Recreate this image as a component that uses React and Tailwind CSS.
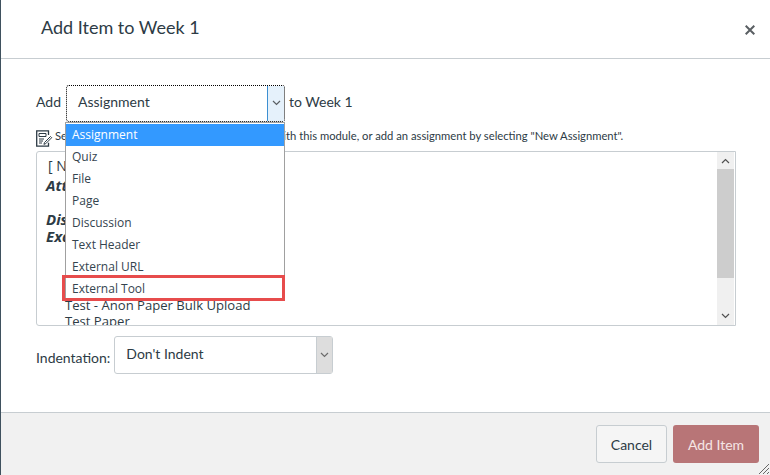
import React from 'react';

const menuItems = ['Assignment', 'Quiz', 'File', 'Page', 'Discussion', 'Text Header', 'External URL', 'External Tool'];

const Chevron = ({ className }) => (
  <svg className={className} width="9" height="6" viewBox="0 0 9 6" fill="none" stroke="currentColor" strokeWidth="1.2">
    <path d="M1 1l3.5 3.5L8 1" />
  </svg>
);

const NoteIcon = () => (
  <svg width="17" height="17" viewBox="0 0 17 17" fill="none" stroke="#2d3b45" className="shrink-0">
    <path d="M12.5 5V.8H.7v15.4h11.8v-3.5" strokeWidth="1.3" />
    <path d="M3 3.5h7v3H3z" strokeWidth="1" />
    <path d="M3 9h5M3 11h4M3 13h3" strokeWidth="1" />
    <path d="M8.5 12.5l-.6 1.8 1.8-.6 6-6-1.2-1.2z" strokeWidth="1" />
  </svg>
);

const App = () => {
  return (
    <div className="relative w-[770px] h-[475px] flex flex-col overflow-hidden bg-white border-l border-[#3f515e] text-[#2d3b45] font-['Lato',sans-serif]">
      {/* Header */}
      <div className="h-[59px] shrink-0 flex items-center justify-between pl-10 pr-[15px] border-b-[1px] border-[#c7cdd1]">
        <h1 className="text-[18px] leading-6 -mt-1">Add Item to Week 1</h1>
        <svg width="10" height="10" viewBox="0 0 10 10" stroke="#5a5f63" strokeWidth="2" className="mt-0.5">
          <path d="M.7.7l8.6 8.6M9.3.7L.7 9.3" />
        </svg>
      </div>

      {/* Body */}
      <div className="flex-1 flex flex-col pl-[35px] pt-[26px]">
        <div className="flex items-center h-9 text-[14px]">
          <span className="-mt-[4px]">Add</span>
          <div className="ml-[5px] w-[219px] h-[37px] flex border border-dotted border-black rounded-[3px] bg-white">
            <span className="flex-1 pl-[11px] leading-[31px]">Assignment</span>
            <span className="w-[17px] flex items-center justify-center bg-[#e5f1fb] border-l border-[#3d8fd1]">
              <Chevron className="text-[#5a5f63]" />
            </span>
          </div>
          <span className="ml-[4px] -mt-[4px]">to Week 1</span>
        </div>

        <div className="flex items-center gap-[2px] h-[20px] mt-[7px] whitespace-nowrap">
          <NoteIcon />
          <span className="text-[11.24px] -mt-[4px]">Select the assignment you want to associate with this module, or add an assignment by selecting "New Assignment".</span>
        </div>

        {/* Item list */}
        <div className="mt-[3px] w-[700px] h-[175px] flex border border-[#c7cdd1] rounded-l-[3px] overflow-hidden font-['Open_Sans',sans-serif] text-[14px] leading-[17px]">
          <div className="flex-1 pl-[11px] pt-[5px] overflow-hidden">
            <div>[ New Assignment ]</div>
            <div className="font-bold italic text-[15px] mt-[3px] -ml-[2px]">Attendance</div>
            <div className="font-bold italic text-[15px] mt-[17px] -ml-[2px]">Discussion</div>
            <div className="font-bold italic text-[15px] -ml-[2px]">Exam</div>
            <div className="pl-[17px] mt-[52px] text-[13.1px]">Test - Anon Paper Bulk Upload</div>
            <div className="pl-[17px] text-[13.1px] -mt-[1px]">Test Paper</div>
          </div>
          <div className="w-[17px] mr-[1px] flex flex-col bg-[#f0f0f0]">
            <div className="h-[17px] flex items-center justify-center">
              <Chevron className="rotate-180 text-[#505050]" />
            </div>
            <div className="h-[109px] bg-[#cdcdcd]"></div>
            <div className="flex-1 flex items-end justify-center pb-[6px]">
              <Chevron className="text-[#505050]" />
            </div>
          </div>
        </div>

        <div className="flex items-center mt-[10px] text-[14px]">
          <span className="mt-[4px]">Indentation:</span>
          <div className="ml-[4px] w-[219px] h-[38px] flex border border-[#c7cdd1] rounded-[3px] bg-white">
            <span className="flex-1 pl-[11px] leading-[34px]">Don't Indent</span>
            <span className="w-[16px] flex items-center justify-center bg-[#dddddd] border-l border-[#c7cdd1]">
              <Chevron className="text-[#6b6b6b]" />
            </span>
          </div>
        </div>
      </div>

      {/* Footer */}
      <div className="relative h-[63px] shrink-0 flex items-start justify-end gap-[6px] pt-[12px] pr-[11px] bg-[#f1f1f1] border-t border-[#c7cdd1] text-[14px]">
        <button className="w-[71px] h-[38px] rounded-[3px] bg-[#f5f5f5] border border-[#c7cdd1]">Cancel</button>
        <button className="w-[86px] h-[38px] rounded-[3px] bg-[#b87577] text-[#f5e6e6]">Add Item</button>
        <svg width="12" height="12" viewBox="0 0 12 12" stroke="#444" strokeWidth="0.8" className="absolute right-0 bottom-0">
          <path d="M1 11L11 1M5 11l6-6M9 11l2-2" />
        </svg>
      </div>

      {/* Open dropdown menu */}
      <div className="absolute left-[64px] top-[122px] w-[220px] pt-[1px] bg-white border border-[#a0a0a0] font-['Open_Sans',sans-serif] text-[12px] text-[#34444f]">
        {menuItems.map((item, i) => (
          <div key={item} className={`h-[22px] leading-[22px] pl-[6px] ${i === 0 ? 'bg-[#3399ff] text-white' : ''}`}>
            {item}
          </div>
        ))}
      </div>

      {/* Red annotation */}
      <div className="absolute left-[61px] top-[275px] w-[223px] h-[26px] border-[3px] border-[#e74c4c]"></div>
    </div>
  );
};

export default App;
